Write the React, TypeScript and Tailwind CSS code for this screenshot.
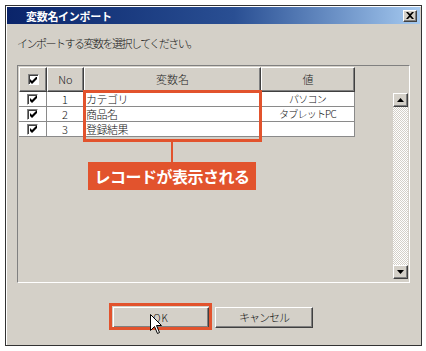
import React from "react";

const raised =
  "border border-t-white border-l-white border-r-[#404040] border-b-[#404040] shadow-[inset_-1px_-1px_0_#808080]";

function Check() {
  return (
    <div className="w-[11px] h-[11px] bg-white border border-t-[#808080] border-l-[#808080] border-r-white border-b-white shadow-[inset_1px_1px_0_#404040] flex items-center justify-center">
      <svg width="7" height="7" viewBox="0 0 7 7" className="ml-[1px] mt-[1px]">
        <path d="M0 2 L2 4 L7 -1 L7 2 L2 7 L0 5 Z" fill="#000" />
      </svg>
    </div>
  );
}

const rows = [
  { no: "1", name: "カテゴリ", value: "パソコン" },
  { no: "2", name: "商品名", value: "タブレットPC" },
  { no: "3", name: "登録結果", value: "" },
];

export default function App() {
  return (
    <div className="relative w-[426px] h-[351px] bg-white overflow-hidden pt-[5px] pl-[5px] font-['Noto_Sans_CJK_JP',sans-serif] text-black">
      {/* window */}
      <div className="w-[417px] h-[341px] border border-[#333333] bg-[#d4d0c8] p-[1px] flex flex-col shadow-[inset_1px_1px_0_#ffffff]">
        {/* title bar */}
        <div className="h-[17px] flex items-center justify-between bg-linear-to-r from-[#0a246a] via-[#2a4f93] via-55% to-[#a6caf0]">
          <span className="pl-[19px] text-[11px] leading-[12px] font-bold text-white tracking-[-0.3px]">
            変数名インポート
          </span>
          <div
            className={`mr-[3px] w-[14px] h-[12px] bg-[#d4d0c8] ${raised} flex items-center justify-center`}
          >
            <svg width="8" height="7" viewBox="0 0 8 7">
              <path d="M0 0 L2 0 L4 2 L6 0 L8 0 L5 3.5 L8 7 L6 7 L4 5 L2 7 L0 7 L3 3.5 Z" fill="#000" />
            </svg>
          </div>
        </div>

        {/* instruction */}
        <div className="mt-[13px] pl-[10px] text-[11px] leading-[12px] font-light tracking-[-1.5px] text-[#111]">
          インポートする変数を選択してください。
        </div>

        {/* panel */}
        <div className="mt-[16px] ml-[10px] w-[393px] h-[218px] border border-t-[#808080] border-l-[#808080] border-r-white border-b-white flex">
          <div className="w-[337px] pl-[1px] pt-[1px]">
            {/* header */}
            <div className="grid grid-cols-[28px_37px_177px_94px] h-[25px] text-[11px] font-light text-[#222]">
              <div className={`${raised} bg-[#d4d0c8] flex items-center justify-center`}>
                <Check />
              </div>
              <div className={`${raised} bg-[#d4d0c8] flex items-center justify-center`}>No</div>
              <div className={`${raised} bg-[#d4d0c8] flex items-center justify-center`}>変数名</div>
              <div className={`${raised} bg-[#d4d0c8] flex items-center justify-center`}>値</div>
            </div>
            {rows.map((r) => (
              <div
                key={r.no}
                className="grid grid-cols-[28px_37px_177px_94px] h-[15px] bg-white text-[11px] leading-[14px] font-light text-[#111]"
              >
                <div className="border-r border-b border-[#8a8a8a] flex items-center justify-center">
                  <Check />
                </div>
                <div className="border-r border-b border-[#8a8a8a] text-center">{r.no}</div>
                <div className="border-r border-b border-[#8a8a8a] pl-[2px] tracking-[-0.5px]">{r.name}</div>
                <div className="border-r border-b border-[#8a8a8a] text-center text-[10px] tracking-[-0.8px]">
                  {r.value}
                </div>
              </div>
            ))}
          </div>
          <div className="flex-1" />
          {/* scrollbar */}
          <div className="mt-[27px] mb-[3px] mr-[1px] w-[15px] flex flex-col">
            <div className={`h-[14px] bg-[#d4d0c8] ${raised} flex items-center justify-center`}>
              <svg width="7" height="4" viewBox="0 0 7 4">
                <path d="M3.5 0 L7 4 L0 4 Z" fill="#000" />
              </svg>
            </div>
            <div className="flex-1 bg-[image:repeating-conic-gradient(#ffffff_0%_25%,#d4d0c8_0%_50%)] bg-[length:2px_2px]" />
            <div className={`h-[14px] bg-[#d4d0c8] ${raised} flex items-center justify-center`}>
              <svg width="7" height="4" viewBox="0 0 7 4">
                <path d="M0 0 L7 0 L3.5 4 Z" fill="#000" />
              </svg>
            </div>
          </div>
        </div>

        {/* buttons */}
        <div className="mt-[24px] pl-[106px] flex gap-[6px] text-[11px] font-light text-[#111]">
          <div className={`w-[96px] h-[21px] bg-[#d4d0c8] ${raised} flex items-center justify-center`}>
            <span className="text-[10px] tracking-[1px]">OK</span>
          </div>
          <div className={`w-[98px] h-[21px] bg-[#d4d0c8] ${raised} flex items-center justify-center`}>
            <span className="tracking-[-1px]">キャンセル</span>
          </div>
        </div>
      </div>

      {/* overlays: highlight box */}
      <div className="absolute left-[83px] top-[90px] w-[179px] h-[52px] border-[3px] border-[#e2532d]" />
      <div className="absolute left-[171px] top-[142px] w-[2px] h-[20px] bg-[#e2532d]" />
      <div className="absolute left-[88px] top-[162px] w-[168px] h-[28px] bg-[#e2532d] flex items-center justify-center text-white text-[16px] font-bold tracking-[-0.5px]">
        レコードが表示される
      </div>
      <div className="absolute left-[109px] top-[303px] w-[103px] h-[27px] border-[3px] border-[#e2532d]" />

      {/* cursor */}
      <svg
        className="absolute left-[150px] top-[314px]"
        width="12"
        height="21"
        viewBox="0 0 12 21"
      >
        <path
          d="M0.5 0.5 L0.5 16.5 L4.5 12.5 L7.5 19.5 L9.5 18.5 L6.5 11.5 L11.5 11.5 Z"
          fill="#ffffff"
          stroke="#000000"
          strokeWidth="1"
        />
      </svg>
    </div>
  );
}
